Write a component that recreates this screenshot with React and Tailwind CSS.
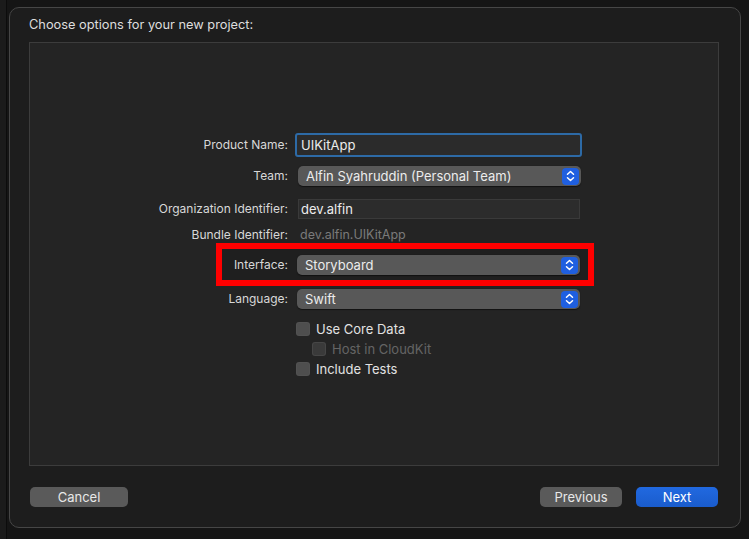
import React from "react";

const font = { fontFamily: "Inter, 'Noto Sans', sans-serif" };

function Stepper() {
  return (
    <div className="w-[17px] h-[17px] rounded-[4px] bg-[#1f5fe0] flex items-center justify-center">
      <svg width="9" height="12" viewBox="0 0 9 12" fill="none" stroke="white" strokeWidth="1.5" strokeLinecap="round" strokeLinejoin="round">
        <path d="M1.5 4.2 L4.5 1.5 L7.5 4.2" />
        <path d="M1.5 7.8 L4.5 10.5 L7.5 7.8" />
      </svg>
    </div>
  );
}

function Popup({ text }) {
  return (
    <div className="w-[283px] h-[20px] rounded-[5px] bg-[#585858] flex items-center justify-between pl-[8px] pr-[2px] shadow-[0_0.5px_1px_rgba(0,0,0,0.5)]">
      <span className="text-[13px] text-[#ececec] leading-none">{text}</span>
      <Stepper />
    </div>
  );
}

function Label({ children, className = "" }) {
  return (
    <div className={"w-[267px] shrink-0 text-right pr-[9px] text-[12px] text-[#d8d8d8] leading-none " + className}>
      {children}
    </div>
  );
}

function Checkbox({ label, disabled }) {
  return (
    <div className="flex items-center gap-[6px]">
      <div className={"w-[14px] h-[14px] rounded-[3px] " + (disabled ? "bg-[#3a3a3a]" : "bg-[#4e4e4e]") + " border border-[#5a5a5a]/40"} />
      <span className={"text-[13px] leading-none " + (disabled ? "text-[#646464]" : "text-[#e2e2e2]")}>{label}</span>
    </div>
  );
}

export default function App() {
  return (
    <div className="w-[749px] h-[539px] bg-[#151515] relative overflow-hidden" style={font}>
      <div className="absolute left-[6px] top-0 bottom-0 w-px bg-[#0c0c0c]" />
      <div className="absolute left-0 top-0 bottom-0 w-[6px] bg-[#1b1b1b]" />
      <div className="pt-[7px] pl-[9px]">
        <div className="w-[732px] h-[521px] rounded-[10px] border border-[#464646] bg-[#1d1d1d] px-[19px] flex flex-col">
          <div className="h-[34px] flex items-center">
            <span className="text-[12.8px] text-[#dedede]">Choose options for your new project:</span>
          </div>
          <div className="w-[690px] h-[424px] border border-[#3c3c3c] bg-[#242424] flex flex-col pt-[90px]">
            {/* Product Name */}
            <div className="flex items-center h-[24px]">
              <Label>Product Name:</Label>
              <div className="w-[287px] h-[24px] rounded-[3px] border-[2px] border-[#2d6aa6] bg-[#2b2b2b] flex items-center px-[4px] -ml-[2px]">
                <span className="text-[13px] text-[#ececec] leading-none">UIKitApp</span>
              </div>
            </div>
            {/* Team */}
            <div className="flex items-center h-[20px] mt-[9px]">
              <Label>Team:</Label>
              <div className="ml-[1px]"><Popup text="Alfin Syahruddin (Personal Team)" /></div>
            </div>
            {/* Org */}
            <div className="flex items-center h-[20px] mt-[13px]">
              <Label>Organization Identifier:</Label>
              <div className="ml-[1px] w-[282px] h-[20px] bg-[#2c2c2c] border border-[#3a3a3a] flex items-center px-[2px]">
                <span className="text-[13px] text-[#ececec] leading-none">dev.alfin</span>
              </div>
            </div>
            {/* Bundle */}
            <div className="flex items-center h-[20px] mt-[6px]">
              <Label>Bundle Identifier:</Label>
              <span className="text-[12.5px] text-[#7a7a7a] leading-none ml-[3px]">dev.alfin.UIKitApp</span>
            </div>
            {/* Interface with red box */}
            <div className="relative flex items-center h-[20px] mt-[10px]">
              <div className="absolute left-[186px] -top-[12px] w-[378px] h-[43px] border-[6px] border-[#ff0000] bg-[#1f1f1f] pointer-events-none" />
              <Label className="relative">Interface:</Label>
              <div className="relative"><Popup text="Storyboard" /></div>
            </div>
            {/* Language */}
            <div className="flex items-center h-[20px] mt-[14px]">
              <Label>Language:</Label>
              <div><Popup text="Swift" /></div>
            </div>
            {/* Checkboxes */}
            <div className="ml-[266px] mt-[13px] flex flex-col">
              <Checkbox label="Use Core Data" />
              <div className="ml-[16px] mt-[6px]"><Checkbox label="Host in CloudKit" disabled /></div>
              <div className="mt-[6px]"><Checkbox label="Include Tests" /></div>
            </div>
          </div>
          <div className="flex items-center justify-between mt-[21px] pl-[1px] pr-[3px]">
            <button className="w-[98px] h-[20px] rounded-[5px] bg-[#5a5a5a] text-[13px] text-[#e8e8e8] leading-none">Cancel</button>
            <div className="flex gap-[14px]">
              <button className="w-[82px] h-[20px] rounded-[5px] bg-[#5a5a5a] text-[13px] text-[#e8e8e8] leading-none">Previous</button>
              <button className="w-[82px] h-[20px] rounded-[5px] bg-gradient-to-b from-[#2169e0] to-[#1a5ccc] text-[13px] text-white leading-none">Next</button>
            </div>
          </div>
        </div>
      </div>
    </div>
  );
}
